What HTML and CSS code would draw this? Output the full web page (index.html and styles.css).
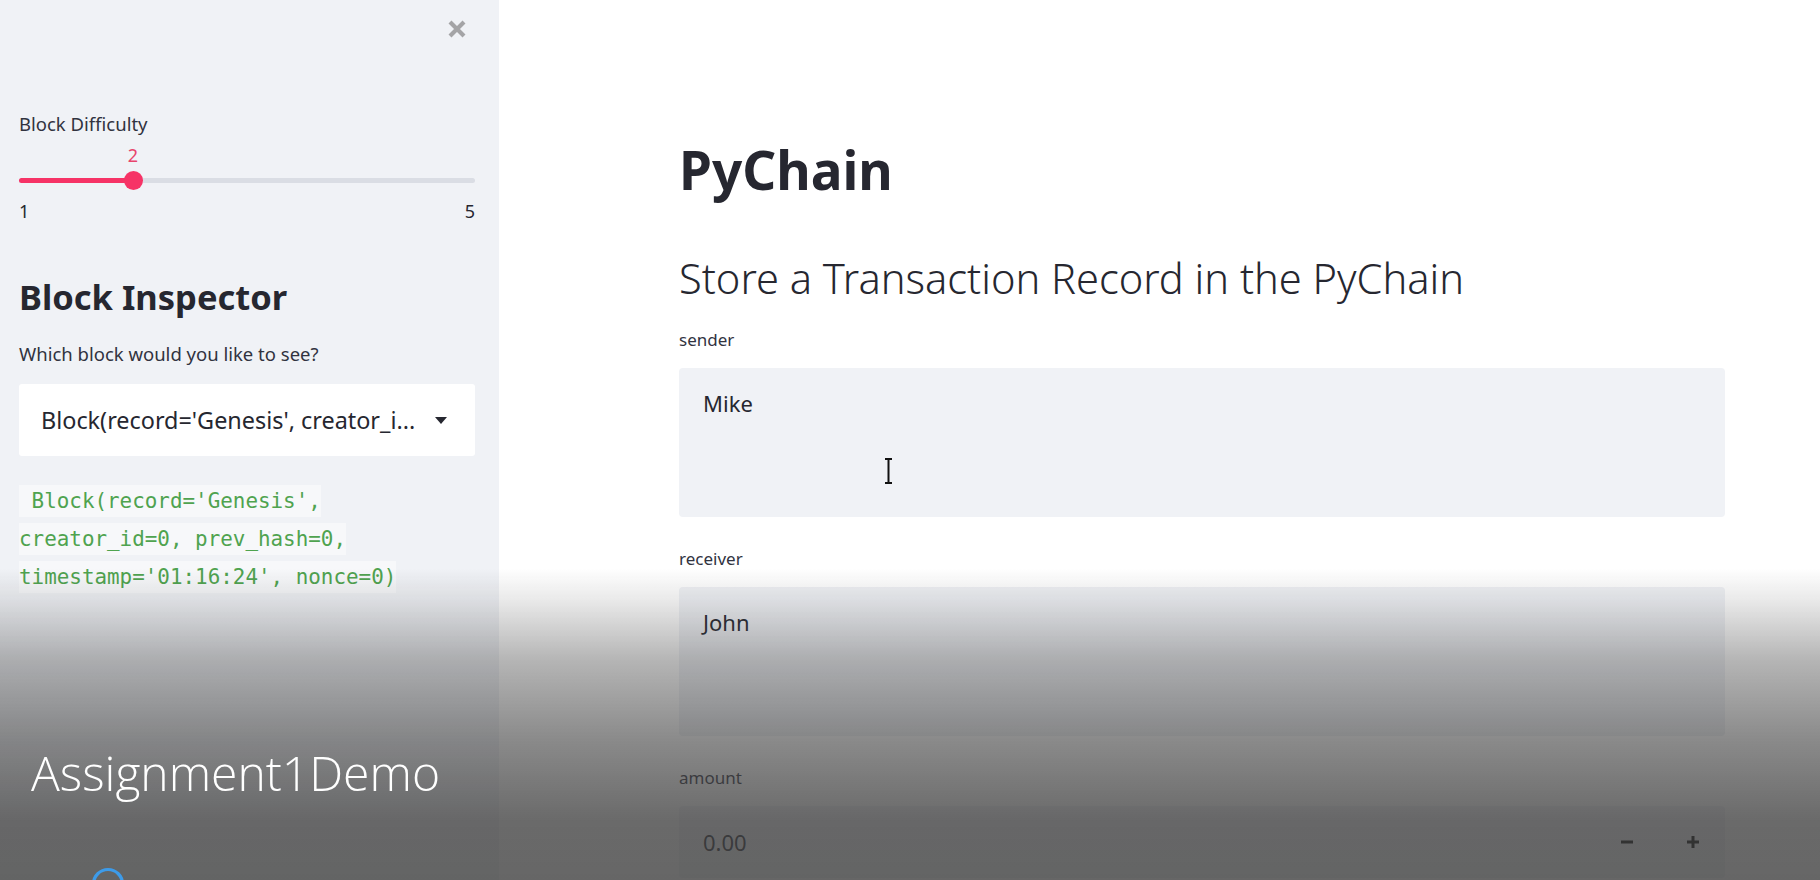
FILE: index.html
```html
<!DOCTYPE html>
<html lang="en">
<head>
<meta charset="utf-8">
<title>PyChain</title>
<link rel="stylesheet" href="styles.css">
</head>
<body>
<div class="app">
  <aside class="sidebar">
    <div class="close-row">
      <svg class="close-icon" width="20" height="20" viewBox="0 0 20 20"><path d="M3 3 L17 17 M17 3 L3 17" stroke="#a4a4a6" stroke-width="4.2" fill="none"/></svg>
    </div>
    <div class="widget-label slider-label">Block Difficulty</div>
    <div class="slider">
      <div class="rail">
        <div class="rail-fill" style="width:25%"></div>
        <div class="thumb" style="left:25%">
          <span class="thumb-value">2</span>
        </div>
      </div>
      <div class="ticks"><span>1</span><span>5</span></div>
    </div>
    <h2 class="side-title">Block Inspector</h2>
    <div class="widget-label select-label">Which block would you like to see?</div>
    <div class="select">
      <span class="select-text">Block(record='Genesis', creator_i...</span>
      <svg class="caret" width="12" height="7" viewBox="0 0 12 7"><path d="M0 0 H12 L6 7 Z" fill="#262730"/></svg>
    </div>
    <div class="code-out">
      <code>&nbsp;Block(record='Genesis',</code><br>
      <code>creator_id=0, prev_hash=0,</code><br>
      <code>timestamp='01:16:24', nonce=0)</code>
    </div>
  </aside>
  <main class="main">
    <div class="block">
      <h1 class="title">PyChain</h1>
      <h2 class="subtitle">Store a Transaction Record in the PyChain</h2>
      <div class="field">
        <div class="field-label">sender</div>
        <div class="textarea"><span>Mike</span>
          <svg class="ibeam" width="9" height="26" viewBox="0 0 9 26"><path d="M1 1 H8 M4.5 1 V25 M1 25 H8" stroke="#111" stroke-width="2" fill="none"/></svg>
        </div>
      </div>
      <div class="field">
        <div class="field-label">receiver</div>
        <div class="textarea"><span>John</span></div>
      </div>
      <div class="field">
        <div class="field-label">amount</div>
        <div class="number">
          <span class="number-value">0.00</span>
          <div class="steppers">
            <svg width="12" height="12" viewBox="0 0 12 12"><path d="M0 6 H12" stroke="#000" stroke-width="3"/></svg>
            <svg width="12" height="12" viewBox="0 0 12 12"><path d="M0 6 H12 M6 0 V12" stroke="#000" stroke-width="3"/></svg>
          </div>
        </div>
      </div>
    </div>
  </main>
</div>
<div class="overlay">
  <div class="caption">Assignment1Demo</div>
  <svg class="spinner" width="36" height="36" viewBox="0 0 36 36"><circle cx="18" cy="18" r="14.5" stroke="#3d9be9" stroke-width="3.2" fill="none"/></svg>
</div>
</body>
</html>
```
FILE: styles.css
```css
* { box-sizing: border-box; }
html, body {
  margin: 0;
  padding: 0;
  width: 1820px;
  height: 880px;
  overflow: hidden;
  background: #ffffff;
  font-family: "Noto Sans", "Open Sans", sans-serif;
  color: #262730;
}
.app {
  display: flex;
  height: 880px;
}
.sidebar {
  width: 499px;
  flex: none;
  background: #f0f2f6;
  padding: 19px 24px 0 19px;
  display: flex;
  flex-direction: column;
}
.close-row {
  display: flex;
  justify-content: flex-end;
  padding-right: 8px;
  height: 20px;
}
.widget-label {
  font-size: 18.5px;
  line-height: 24px;
  color: #31333f;
}
.slider-label { margin-top: 73px; }
.slider { margin-top: 42px; }
.rail {
  position: relative;
  height: 5px;
  border-radius: 3px;
  background: #dadde4;
}
.rail-fill {
  height: 100%;
  border-radius: 3px;
  background: #f63366;
}
.thumb {
  position: absolute;
  top: 50%;
  width: 19px;
  height: 19px;
  margin: -10px 0 0 -9.5px;
  border-radius: 50%;
  background: #f63366;
}
.thumb-value {
  position: absolute;
  left: 50%;
  bottom: 24px;
  transform: translateX(-50%);
  font-size: 18px;
  line-height: 22px;
  color: #e8456c;
}
.ticks {
  display: flex;
  justify-content: space-between;
  margin-top: 17px;
  font-size: 18px;
  line-height: 22px;
}
.side-title {
  margin: 54px 0 0;
  font-size: 34.5px;
  line-height: 42px;
  font-weight: 700;
  color: #262730;
}
.select-label { margin-top: 24px; }
.select {
  margin-top: 18px;
  height: 72px;
  background: #ffffff;
  border-radius: 3px;
  display: flex;
  align-items: center;
  justify-content: space-between;
  padding: 0 28px 0 22px;
}
.select-text {
  font-size: 23.4px;
  color: #262730;
  white-space: nowrap;
}
.code-out {
  margin-top: 26px;
  font-family: "DejaVu Sans Mono", "Liberation Mono", monospace;
  font-size: 20.9px;
  line-height: 38px;
}
.code-out code {
  font-family: inherit;
  color: #4fa34f;
  background: #f7f8fa;
  padding: 4px 0;
}
.main {
  flex: 1;
  padding: 137px 95px 0 180px;
}
.title {
  margin: 0;
  font-size: 53px;
  line-height: 66px;
  font-weight: 700;
  color: #262730;
}
.subtitle {
  margin: 50px 0 0;
  font-size: 41.6px;
  line-height: 50px;
  font-weight: 300;
  color: #262730;
}
.field { margin-top: 31px; }
.field:first-of-type { margin-top: 26px; }
.field-label {
  font-size: 17px;
  line-height: 22px;
  color: #31333f;
}
.textarea {
  position: relative;
  margin-top: 17px;
  height: 149px;
  background: #f0f2f6;
  border-radius: 4px;
  padding: 21px 24px;
  font-size: 22px;
  line-height: 28px;
}
.ibeam {
  position: absolute;
  left: 205px;
  top: 90px;
}
.number {
  margin-top: 17px;
  height: 72px;
  background: #f0f2f6;
  border-radius: 4px;
  display: flex;
  align-items: center;
  justify-content: space-between;
  padding: 0 26px 0 24px;
  font-size: 22px;
}
.steppers {
  display: flex;
  gap: 54px;
}
.steppers svg { display: block; }
.overlay {
  position: fixed;
  left: 0;
  top: 568px;
  width: 1820px;
  height: 312px;
  background: linear-gradient(to bottom,
    rgba(64,64,64,0) 0%,
    rgba(64,64,64,0.11) 10%,
    rgba(64,64,64,0.39) 29.5%,
    rgba(64,64,64,0.61) 55%,
    rgba(64,64,64,0.78) 81%,
    rgba(64,64,64,0.8) 100%);
  pointer-events: none;
  padding: 177px 0 0 31px;
}
.caption {
  font-family: "Open Sans", "Noto Sans", sans-serif;
  font-weight: 300;
  font-size: 48px;
  line-height: 56px;
  color: #ffffff;
}
.spinner {
  position: absolute;
  left: 90px;
  top: 298px;
}
```
